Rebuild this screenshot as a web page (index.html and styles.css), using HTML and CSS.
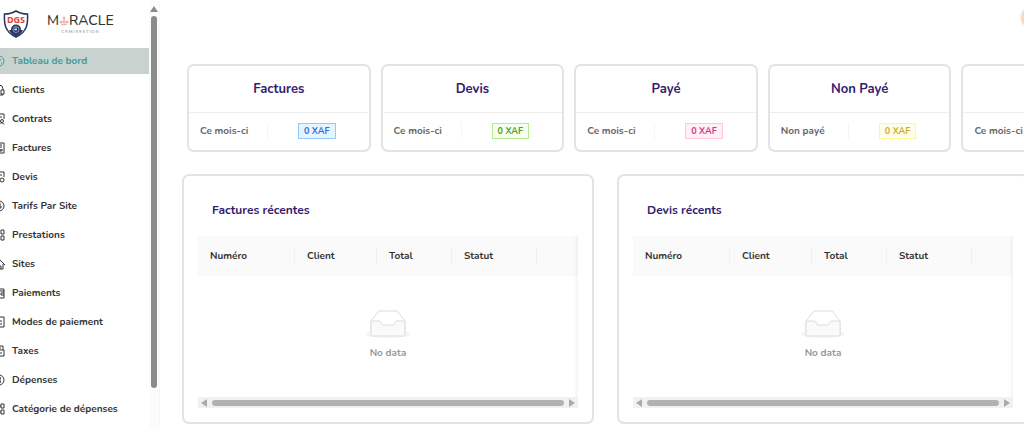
FILE: index.html
```html
<!DOCTYPE html>
<html lang="fr">
<head>
<meta charset="utf-8">
<meta name="viewport" content="width=device-width, initial-scale=1">
<title>Tableau de bord</title>
<link rel="stylesheet" href="styles.css">
</head>
<body>
<div class="app">
  <aside class="sidebar">
    <div class="side-content">
      <div class="brand">
        <svg class="shield" viewBox="0 0 26 28" role="img" aria-label="DGS">
          <path d="M13 1C9 3.500 5 4 1.500 4C1 13 1.500 22 13 27C24.500 22 25 13 24.500 4C21 4 17 3.500 13 1Z" fill="#fff" stroke="#26365f" stroke-width="1.500"/>
          <path d="M6 20C7 22 9 24.500 13 26.500C17 24.500 19 22 20 20Z" fill="#26365f"/>
          <circle cx="13" cy="19.500" r="5" fill="#26365f"/>
          <circle cx="13" cy="19.500" r="3" fill="none" stroke="#8d9cc4"/>
          <path d="M11 19.500h3M13 17.500v3" stroke="#dfe5f5"/>
          <text x="13" y="13" text-anchor="middle" class="shield-text">DGS</text>
        </svg>
        <div class="wordmark">
          <div class="word">M<svg class="spark" viewBox="0 0 10 12" aria-hidden="true"><g fill="none" stroke="#e9a0a0"><circle cx="2" cy="7" r="1"/><circle cx="5" cy="3" r="1"/><circle cx="8" cy="7" r="1"/><path d="M5 4v5M3 7h4M2 9l3 1 3-1"/></g></svg>RACLE</div>
          <div class="tagline">CRM/GESTION</div>
        </div>
      </div>
      <nav class="nav">
        <a href="#" class="item active" aria-current="page"><svg class="icon" viewBox="0 0 12 12"><circle cx="6" cy="6" r="5"/><path d="M6 7l2-3M3 8h1M8 8h1"/></svg>Tableau de bord</a>
        <a href="#" class="item"><svg class="icon" viewBox="0 0 12 12"><path d="M2 6V5a4 4 0 0 1 8 0v1M1 6h3v4H1zM8 6h3v4H8zM10 10v1H7"/></svg>Clients</a>
        <a href="#" class="item"><svg class="icon" viewBox="0 0 12 12"><path d="M5 11H2V1h9v5M4 4h5"/><circle cx="9" cy="8" r="1.500"/><path d="M6 11.500c0-2 5-2 5 0"/></svg>Contrats</a>
        <a href="#" class="item"><svg class="icon" viewBox="0 0 12 12"><path d="M2 1h9v10H2zM4 3h5M4 5h5M8 7v3M6 8h4"/></svg>Factures</a>
        <a href="#" class="item"><svg class="icon" viewBox="0 0 12 12"><path d="M5 11H2V1h9v5M4 4h5"/><circle cx="9" cy="9" r="2"/></svg>Devis</a>
        <a href="#" class="item"><svg class="icon" viewBox="0 0 12 12"><circle cx="6" cy="6" r="5"/><path d="M8 4H5v2h3v2H5M6 3v6"/></svg>Tarifs Par Site</a>
        <a href="#" class="item"><svg class="icon" viewBox="0 0 12 12"><path d="M2 1h3v4H2zM8 1h3v4H8zM2 7h3v4H2zM8 7h3v4H8z"/></svg>Prestations</a>
        <a href="#" class="item"><svg class="icon" viewBox="0 0 12 12"><path d="M1 6l5-5 6 6M2 6v5h8V6M5 11V8h3v3"/></svg>Sites</a>
        <a href="#" class="item"><svg class="icon" viewBox="0 0 12 12"><path d="M1 2h10v9H1zM1 4h10M11 6H8v2h3"/></svg>Paiements</a>
        <a href="#" class="item"><svg class="icon" viewBox="0 0 12 12"><path d="M1 1h10v10H1zM3 5h6M3 8h6"/></svg>Modes de paiement</a>
        <a href="#" class="item"><svg class="icon" viewBox="0 0 12 12"><path d="M2 5V1h8v4M1 5h10v6H1zM4 3h4M7 8h2"/></svg>Taxes</a>
        <a href="#" class="item"><svg class="icon" viewBox="0 0 12 12"><circle cx="6" cy="6" r="5"/><path d="M8 4H6v4h2M7 3v6"/></svg>Dépenses</a>
        <a href="#" class="item"><svg class="icon" viewBox="0 0 12 12"><path d="M2 1h3v4H2zM8 1h3v4H8zM2 7h3v4H2zM8 7h3v4H8zM5 3h3M5 9h3"/></svg>Catégorie de dépenses</a>
      </nav>
    </div>
    <div class="vscroll" aria-hidden="true"><svg class="up" viewBox="0 0 8 6"><path d="M4 0l4 6H0z"/></svg><span class="vthumb"></span></div>
  </aside>

  <main class="main">
    <header class="topbar"><button class="avatar" type="button" aria-label="Profil"></button></header>

    <section class="stats">
      <article class="card"><h2>Factures</h2><div class="row"><span class="label">Ce mois-ci</span><span class="value"><span class="tag blue">0 XAF</span></span></div></article>
      <article class="card"><h2>Devis</h2><div class="row"><span class="label">Ce mois-ci</span><span class="value"><span class="tag green">0 XAF</span></span></div></article>
      <article class="card"><h2>Payé</h2><div class="row"><span class="label">Ce mois-ci</span><span class="value"><span class="tag pink">0 XAF</span></span></div></article>
      <article class="card"><h2>Non Payé</h2><div class="row"><span class="label">Non payé</span><span class="value"><span class="tag yellow">0 XAF</span></span></div></article>
      <article class="card"><h2>&nbsp;</h2><div class="row"><span class="label">Ce mois-ci</span></div></article>
    </section>

    <section class="panels">
      <article class="panel">
        <h3>Factures récentes</h3>
        <div class="table-box">
          <table>
            <colgroup><col class="c-num"><col class="c-client"><col class="c-total"><col class="c-status"><col></colgroup>
            <thead><tr><th>Numéro</th><th>Client</th><th>Total</th><th>Statut</th><td></td></tr></thead>
            <tbody><tr><td colspan="5" class="empty">
              <svg class="inbox" viewBox="0 0 46 30" aria-hidden="true"><ellipse cx="23" cy="25" rx="22" ry="4" class="shade"/><path class="lid" d="M6 12L14 2h18l8 10v14H6z"/><path class="tray" d="M6 12h9c1 0 1 4 3 4h10c2 0 2-4 3-4h9v14q0 1-1 1H7q-1 0-1-1z"/></svg>
              <div>No data</div></td></tr></tbody>
          </table>
          <div class="hscroll" aria-hidden="true"><svg class="arrow" viewBox="0 0 6 8"><path d="M6 0v8L0 4z"/></svg><span class="hthumb"></span><svg class="arrow" viewBox="0 0 6 8"><path d="M0 0v8l6-4z"/></svg></div>
        </div>
      </article>
      <article class="panel">
        <h3>Devis récents</h3>
        <div class="table-box">
          <table>
            <colgroup><col class="c-num"><col class="c-client"><col class="c-total"><col class="c-status"><col></colgroup>
            <thead><tr><th>Numéro</th><th>Client</th><th>Total</th><th>Statut</th><td></td></tr></thead>
            <tbody><tr><td colspan="5" class="empty">
              <svg class="inbox" viewBox="0 0 46 30" aria-hidden="true"><ellipse cx="23" cy="25" rx="22" ry="4" class="shade"/><path class="lid" d="M6 12L14 2h18l8 10v14H6z"/><path class="tray" d="M6 12h9c1 0 1 4 3 4h10c2 0 2-4 3-4h9v14q0 1-1 1H7q-1 0-1-1z"/></svg>
              <div>No data</div></td></tr></tbody>
          </table>
          <div class="hscroll" aria-hidden="true"><svg class="arrow" viewBox="0 0 6 8"><path d="M6 0v8L0 4z"/></svg><span class="hthumb"></span><svg class="arrow" viewBox="0 0 6 8"><path d="M0 0v8l6-4z"/></svg></div>
        </div>
      </article>
    </section>
  </main>
</div>
</body>
</html>
```
FILE: styles.css
```css
* { box-sizing: border-box; }
body {
  margin: 0;
  overflow: hidden;
  background: #fff;
  color: #333;
  font-family: Nunito, Lato, "Open Sans", sans-serif;
  font-size: 10px;
  line-height: 16px;
  font-weight: 700;
}
h2, h3 { margin: 0; color: #32206f; font-weight: 700; }

.app { display: flex; height: 100vh; }
.sidebar { display: flex; flex: 0 0 160px; overflow: hidden; border-right: 1px solid #f7f7f7; }
.side-content { flex: 1; min-width: 0; }
.brand { display: flex; align-items: center; gap: 18px; height: 48px; padding-left: 3px; }
.shield { width: 26px; height: 28px; }
.shield-text { fill: #e0403c; font-family: "Noto Sans", sans-serif; font-size: 9px; font-weight: 700; }
.wordmark { display: flex; flex-direction: column; align-items: center; padding-bottom: 2px; color: #333; }
.word { display: flex; align-items: center; font-size: 14px; line-height: 16px; font-weight: 500; }
.spark { width: 10px; height: 12px; }
.tagline { color: #888; font-size: 4px; line-height: 5px; font-weight: 500; letter-spacing: 1px; }

.nav { display: flex; flex-direction: column; gap: 3px; }
.item { display: flex; align-items: center; gap: 7px; height: 26px; color: #333; text-decoration: none; white-space: nowrap; }
.item.active { background: #c8d3d0; color: #459a98; }
.icon { flex: none; width: 12px; height: 12px; margin-left: -7px; fill: none; stroke: currentColor; stroke-width: 1; }

.vscroll { display: flex; flex: 0 0 10px; flex-direction: column; align-items: center; gap: 4px; padding: 6px 0 40px; background: #fcfcfc; }
.up { width: 8px; height: 6px; fill: #8b8b8b; }
.vthumb { flex: 1; width: 6px; border-radius: 3px; background: #8b8b8b; }

.main { flex: 1; min-width: 0; overflow: hidden; padding-left: 22px; }
.topbar { display: flex; justify-content: flex-end; height: 64px; padding-top: 6px; }
.avatar { width: 23px; height: 23px; margin-right: -20px; padding: 0; border: 0; border-radius: 50%; background: #fcd8bd; box-shadow: 0 0 3px #dce8f4; }

.stats { display: grid; grid-template-columns: repeat(5, 1fr); gap: 10px; margin: 0 -121px 22px 5px; }
.card { border: 2px solid #e3e3e3; border-radius: 7px; }
.card h2 { padding: 14px 0 14px; border-bottom: 1px solid #eee; font-size: 13px; line-height: 18px; text-align: center; }
.row { display: flex; align-items: center; padding: 10px 0 11px 11px; color: #666; }
.label { flex: 0 0 68px; border-right: 1px solid #f5f5f5; }
.value { display: flex; flex: 1; padding-left: 30px; }
.tag { padding: 0 5px; border: 1px solid; font-size: 9px; line-height: 14px; }
.blue { background: #e6f4ff; border-color: #91caff; color: #2f6fd6; }
.green { background: #f6ffed; border-color: #b7eb8f; color: #4aa02c; }
.pink { background: #fff0f6; border-color: #ffc4de; color: #cb3a86; }
.yellow { background: #feffe6; border-color: #fff79a; color: #d4a92a; }

.panels { display: grid; grid-template-columns: repeat(2, 1fr); gap: 23px; margin-right: -5px; }
.panel { padding: 26px 14px 14px; border: 2px solid #e3e3e3; border-radius: 7px; }
.panel h3 { margin: 0 0 18px 14px; font-size: 12px; line-height: 16px; }
.table-box { box-shadow: inset -5px 0 4px -4px #eee; }
table { width: 100%; border-collapse: collapse; table-layout: fixed; }
.c-num { width: 97px; }
.c-client { width: 82px; }
.c-total { width: 75px; }
.c-status { width: 85px; }
thead { background: rgba(0, 0, 0, 0.02); }
th { height: 40px; padding: 0 0 0 12px; text-align: left; background: linear-gradient(#f0f0f0, #f0f0f0) right center / 1px 16px no-repeat; }
.empty { height: 121px; padding: 33px 0 0; color: #999; text-align: center; vertical-align: top; }
.inbox { display: block; width: 46px; height: 30px; margin: 0 auto 6px; }
.shade { fill: #f5f5f5; }
.lid { fill: #fff; stroke: #ddd; }
.tray { fill: #fafafa; stroke: #ddd; }
.hscroll { display: flex; align-items: center; gap: 5px; height: 11px; padding: 0 3px; background: #f1f1f1; }
.arrow { flex: none; width: 6px; height: 8px; fill: #aaa; }
.hthumb { flex: 1; height: 6px; border-radius: 3px; background: #b1b1b1; }
```
